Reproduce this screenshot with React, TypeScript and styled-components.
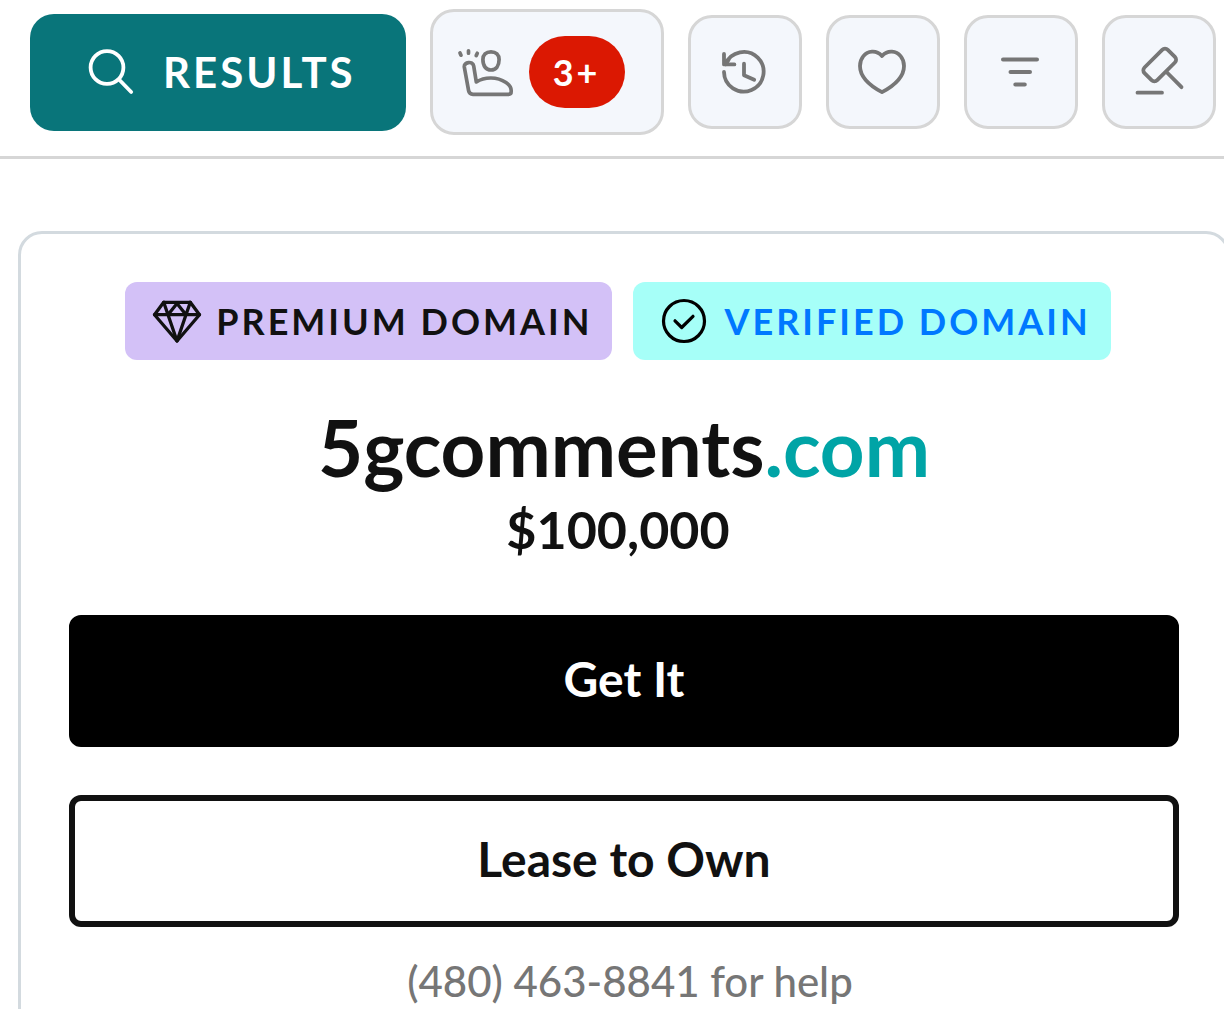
import React from "react";
import styled, { createGlobalStyle } from "styled-components";

const GlobalStyle = createGlobalStyle`
  * { box-sizing: border-box; }
  body {
    margin: 0;
    background: #fff;
    color: #111;
    font-family: Lato, "Open Sans", sans-serif;
    overflow-x: hidden;
  }
  button { font-family: inherit; cursor: pointer; }
`;

const Page = styled.div`
  overflow: hidden;
`;

const Toolbar = styled.nav`
  display: flex;
  align-items: center;
  gap: 24px;
  padding: 9px 8px 21px 30px;
  border-bottom: 3px solid #d6d6d6;
`;

const ResultsButton = styled.button`
  display: flex;
  align-items: center;
  flex: none;
  gap: 28px;
  height: 117px;
  padding: 0 50px 0 57px;
  border: 0;
  border-radius: 24px;
  background: #09757a;
  color: #fff;
  font-size: 42px;
  font-weight: 700;
  letter-spacing: 3px;
`;

const ToolButton = styled.button`
  display: flex;
  align-items: center;
  justify-content: center;
  flex: none;
  width: 114px;
  height: 114px;
  padding: 0;
  border: 3px solid #d6d6d6;
  border-radius: 24px;
  background: #f4f7fc;
  color: #767676;
`;

const BidsButton = styled(ToolButton)`
  gap: 15px;
  width: auto;
  height: 126px;
  padding: 0 36px 0 24px;
`;

const Count = styled.span`
  display: flex;
  align-items: center;
  justify-content: center;
  width: 96px;
  height: 72px;
  border-radius: 36px;
  background: #db1802;
  color: #fff;
  font-size: 36px;
  font-weight: 700;
  letter-spacing: 3px;
`;

const Icon = styled.svg`
  flex: none;
  display: block;
  height: 48px;
  overflow: visible;
  fill: none;
  stroke: currentColor;
  stroke-linecap: round;
  stroke-linejoin: round;
`;

const Card = styled.main`
  margin: 72px -6px 0 18px;
  padding: 48px;
  border: 3px solid #d3dadf;
  border-radius: 24px;
  text-align: center;
`;

const Tags = styled.div`
  display: flex;
  justify-content: center;
  gap: 21px;
  padding-right: 12px;
`;

const Tag = styled.span<{ $bg: string; $color: string }>`
  display: flex;
  align-items: center;
  gap: 15px;
  height: 78px;
  padding: 0 20px 0 28px;
  border-radius: 12px;
  background: ${(p) => p.$bg};
  color: ${(p) => p.$color};
  font-size: 36px;
  font-weight: 700;
  letter-spacing: 3px;
  white-space: nowrap;
`;

const Domain = styled.h1`
  margin: 42px 0 3px;
  font-size: 78px;
  line-height: 90px;
  font-weight: 700;
`;

const Extension = styled.span`
  color: #00a4a6;
`;

const Price = styled.p`
  margin: 0 0 51px;
  padding-right: 12px;
  font-size: 52px;
  line-height: 69px;
  font-weight: 700;
`;

const Actions = styled.div`
  display: grid;
  gap: 48px;
`;

const ActionButton = styled.button<{ $solid?: boolean }>`
  height: 132px;
  padding: 0 0 6px;
  border: 6px solid ${(p) => (p.$solid ? "#000" : "#111")};
  border-radius: 12px;
  background: ${(p) => (p.$solid ? "#000" : "#fff")};
  color: ${(p) => (p.$solid ? "#fff" : "#111")};
  font-size: 48px;
  font-weight: 700;
`;

const Help = styled.p`
  margin: 24px 0 0;
  padding-left: 12px;
  color: #767676;
  font-size: 42px;
  font-weight: 500;
  line-height: 60px;
`;

export default function App() {
  return (
    <Page>
      <GlobalStyle />
      <Toolbar aria-label="Search tools">
        <ResultsButton>
          <Icon viewBox="0 0 48 48" width="48" strokeWidth="3.8">
            <circle cx="20" cy="19.5" r="16.4" />
            <path d="M32 31.5 44.2 44" />
          </Icon>
          RESULTS
        </ResultsButton>
        <BidsButton>
          <Icon viewBox="0 0 57 48" width="57" strokeWidth="3.7">
            <path d="M3 5 4 7.2M11.5 2.8v2.4M20.3 5.3 19.2 7.6" />
            <path d="M34 3.8c5 0 8.1 3 8.1 7.8 0 6.6-3.2 10.4-8.1 10.4s-8.1-3.8-8.1-10.4c0-4.8 3.1-7.8 8.1-7.8Z" />
            <path d="M7.3 19C6.8 13.7 15.8 12.8 16.7 18L19.3 34C28 28.5 40 28.7 49 34.5C53 37.2 54.2 40 54.2 42.5V43.5Q54.2 46.3 51.4 46.3H16Q12.3 46.3 11.6 42.7Z" />
          </Icon>
          <Count>3+</Count>
        </BidsButton>
        <ToolButton aria-label="History">
          <Icon viewBox="0 0 48 48" width="48" strokeWidth="3.8">
            <path d="M3 24A19.8 19.8 0 1 0 4.5 16.2" />
            <path d="M3 6v10.4h10.4M3.5 15.8 7.5 12M23 15.7V27.2L33.2 31.8" />
          </Icon>
        </ToolButton>
        <ToolButton aria-label="Favorites">
          <Icon viewBox="0 0 48 48" width="48" strokeWidth="3.8">
            <path d="M23 8C19.5 4.2 16 3.5 13 3.7C6 4.2 1 10.3 1 18C1 28 10.5 37.5 23 44.2C35.5 37.5 45 28 45 18C45 10.3 40 4.2 33 3.7C30 3.5 26.5 4.2 23 8Z" />
          </Icon>
        </ToolButton>
        <ToolButton aria-label="Filter">
          <Icon viewBox="0 0 48 48" width="48" strokeWidth="4">
            <path d="M6 11.4H40M13.5 24H33M18.3 36.5H27.8" />
          </Icon>
        </ToolButton>
        <ToolButton aria-label="Auctions">
          <Icon viewBox="0 0 48 48" width="48" strokeWidth="3.8">
            <rect x="8.2" y="8" width="33" height="18" rx="4" transform="rotate(-45 24.7 17)" />
            <path d="M31.5 24 46.5 39.2M2.5 44.7H27" />
          </Icon>
        </ToolButton>
      </Toolbar>

      <Card>
        <Tags>
          <Tag $bg="#d3c1f7" $color="#111">
            <Icon viewBox="0 0 48 48" width="48" strokeWidth="3.3">
              <path d="M10.7 5.3H37.3L46.5 17.7 24 44 1.5 17.7Z" />
              <path d="M1.5 17.7H46.5M10.7 5.3 15 17.7 24 6.5 33 17.7 37.3 5.3M15 17.7 24 44 33 17.7" />
            </Icon>
            PREMIUM DOMAIN
          </Tag>
          <Tag $bg="#a6fff8" $color="#0078ff">
            <Icon viewBox="0 0 48 48" width="48" strokeWidth="3.2" color="#000">
              <circle cx="23" cy="24" r="20.5" />
              <path d="M14 23.8 20.7 30.5 32 19.3" />
            </Icon>
            VERIFIED DOMAIN
          </Tag>
        </Tags>
        <Domain>
          5gcomments<Extension>.com</Extension>
        </Domain>
        <Price>$100,000</Price>
        <Actions>
          <ActionButton $solid>Get It</ActionButton>
          <ActionButton>Lease to Own</ActionButton>
        </Actions>
        <Help>(480) 463-8841 for help</Help>
      </Card>
    </Page>
  );
}
